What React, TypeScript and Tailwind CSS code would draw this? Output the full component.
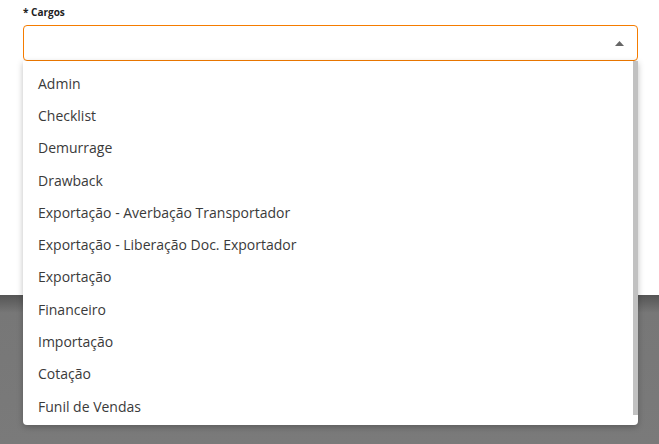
import React from "react";

const items = [
  "Admin",
  "Checklist",
  "Demurrage",
  "Drawback",
  "Exportação - Averbação Transportador",
  "Exportação - Liberação Doc. Exportador",
  "Exportação",
  "Financeiro",
  "Importação",
  "Cotação",
  "Funil de Vendas",
];

export default function App() {
  return (
    <div className="relative w-[659px] h-[444px] overflow-hidden bg-white" style={{ fontFamily: "'Open Sans', sans-serif" }}>
      <div className="absolute left-0 right-0 top-[295px] bottom-0 bg-gradient-to-b from-[#555555] via-[#777777] via-[12%] to-[#7a7a7a]" />
      <div className="relative pl-[23px] pt-[5px] w-[638px]">
        <div className="text-[10px] font-bold text-[#222] leading-[14px] h-[20px]">* Cargos</div>
        <div className="h-[36px] border border-[#f57c00] rounded-[4px] flex items-center justify-end pr-[13px]">
          <svg width="9" height="5" viewBox="0 0 9 5"><path d="M4.5 0 L9 5 L0 5 Z" fill="#666" /></svg>
        </div>
      </div>
      <div className="absolute left-[23px] top-[61px] w-[615px] h-[364px] bg-white rounded-b-[4px] shadow-[0_2px_6px_rgba(0,0,0,0.25)] flex overflow-hidden">
        <div className="flex-1 pt-[6px]">
          {items.map((t) => (
            <div key={t} className="h-[32.3px] flex items-center pl-[15px] text-[14px] text-[#3a3a3a]">
              {t}
            </div>
          ))}
        </div>
        <div className="w-[5px] h-[354px] bg-[#c1c1c1]" />
      </div>
    </div>
  );
}
